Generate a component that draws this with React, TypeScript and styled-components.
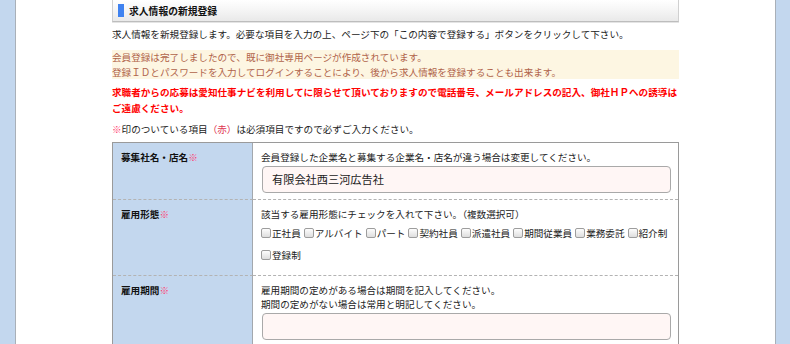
import React from "react";
import styled, { createGlobalStyle } from "styled-components";

const GlobalStyle = createGlobalStyle`
  html, body {
    margin: 0;
    padding: 0;
    background: #c3d7ee;
  }
  body {
    font-family: "Noto Sans CJK JP", "Noto Sans", sans-serif;
    color: #222;
    font-size: 9.6px;
  }
`;

const Page = styled.div`
  width: 759px;
  min-height: 344px;
  margin-left: 15px;
  background: #fff;
  border-left: 1px solid #a9b0b8;
  border-right: 1px solid #a9b0b8;
`;

const Content = styled.div`
  width: 567px;
  margin: 0 auto;
  display: flex;
  flex-direction: column;
`;

const Heading = styled.div`
  height: 21px;
  display: flex;
  align-items: center;
  gap: 5px;
  padding-left: 5px;
  border: 1px solid #d0d0d0;
  border-top: none;
  border-bottom-color: #bdbdbd;
  background: linear-gradient(#ffffff, #f7f7f7 40%, #e9e9e9);
  box-shadow: 0 1px 0 #e4e4e4;
`;

const Marker = styled.span`
  width: 6px;
  height: 13px;
  background: #3f82f0;
`;

const Title = styled.h2`
  margin: 0;
  font-size: 9.8px;
  font-weight: bold;
  color: #111;
`;

const Text = styled.p<{ $top: number; $lh?: number }>`
  margin: ${(p) => p.$top}px 0 0;
  line-height: ${(p) => p.$lh ?? 15}px;
  white-space: nowrap;
`;

const Notice = styled.div`
  margin-top: 8px;
  background: #fdf6e2;
  color: #b0634a;
  line-height: 14.5px;
  padding: 0;
`;

const Warning = styled.p`
  margin: 5px 0 0;
  color: #ff0000;
  font-weight: bold;
  line-height: 16px;
  white-space: nowrap;
`;

const Req = styled.span`
  color: #ff3c6e;
`;

const Red = styled.span`
  color: #e0334f;
`;

const Table = styled.div`
  margin-top: 5px;
  border: 1px solid #9a9a9a;
  border-bottom: none;
  display: grid;
  grid-template-columns: 140px 1fr;
`;

const Label = styled.div<{ $last?: boolean }>`
  background: #c3d7ee;
  border-right: 1px solid #a3a8ad;
  border-bottom: ${(p) => (p.$last ? "none" : "1px dashed #b3b3b3")};
  padding: 7px 0 0 8px;
  font-weight: bold;
  line-height: 15px;
  color: #111;
`;

const Cell = styled.div<{ $pb: number; $last?: boolean }>`
  border-bottom: ${(p) => (p.$last ? "none" : "1px dashed #b3b3b3")};
  padding: 7px 7px ${(p) => p.$pb}px 8px;
  line-height: 15px;
`;

const CellText = styled.div<{ $lh?: number }>`
  line-height: ${(p) => p.$lh ?? 15}px;
`;

const Input = styled.div<{ $top?: number }>`
  margin-top: ${(p) => p.$top ?? 1}px;
  margin-left: 1px;
  height: 25px;
  border: 1px solid #a9a9a9;
  border-radius: 4px;
  background: #fff6f5;
  display: flex;
  align-items: center;
  padding-left: 9px;
  font-size: 11.2px;
  color: #222;
`;

const Checks = styled.div`
  display: flex;
  flex-wrap: wrap;
  column-gap: 3px;
  line-height: 22px;
`;

const CheckItem = styled.label`
  display: inline-flex;
  align-items: center;
  white-space: nowrap;
`;

const Box = styled.span`
  width: 8px;
  height: 8px;
  margin-right: 1px;
  border: 1px solid #9d9d9d;
  border-radius: 2px;
  background: linear-gradient(#fdfdfd, #dedede);
`;

const types = ["正社員", "アルバイト", "パート", "契約社員", "派遣社員", "期間従業員", "業務委託", "紹介制", "登録制"];

export default function App() {
  return (
    <>
      <GlobalStyle />
      <Page>
        <Content>
          <Heading>
            <Marker />
            <Title>求人情報の新規登録</Title>
          </Heading>
          <Text $top={5}>
            求人情報を新規登録します。必要な項目を入力の上、ページ下の「この内容で登録する」ボタンをクリックして下さい。
          </Text>
          <Notice>
            会員登録は完了しましたので、既に御社専用ページが作成されています。
            <br />
            登録ＩＤとパスワードを入力してログインすることにより、後から求人情報を登録することも出来ます。
          </Notice>
          <Warning>
            求職者からの応募は愛知仕事ナビを利用してに限らせて頂いておりますので電話番号、メールアドレスの記入、御社ＨＰへの誘導は
            <br />
            ご遠慮ください。
          </Warning>
          <Text $top={6}>
            <Req>※</Req>印のついている項目<Red>（赤）</Red>は必須項目ですので必ずご入力ください。
          </Text>
          <Table>
            <Label>
              募集社名・店名<Req>※</Req>
            </Label>
            <Cell $pb={6}>
              <CellText>会員登録した企業名と募集する企業名・店名が違う場合は変更してください。</CellText>
              <Input $top={1}>有限会社西三河広告社</Input>
            </Cell>
            <Label>
              雇用形態<Req>※</Req>
            </Label>
            <Cell $pb={9}>
              <CellText>該当する雇用形態にチェックを入れて下さい。（複数選択可）</CellText>
              <Checks>
                {types.map((t) => (
                  <CheckItem key={t}>
                    <Box />
                    {t}
                  </CheckItem>
                ))}
              </Checks>
            </Cell>
            <Label $last>
              雇用期間<Req>※</Req>
            </Label>
            <Cell $pb={8} $last>
              <CellText $lh={14}>
                雇用期間の定めがある場合は期間を記入してください。
                <br />
                期間の定めがない場合は常用と明記してください。
              </CellText>
              <Input $top={2} />
            </Cell>
          </Table>
        </Content>
      </Page>
    </>
  );
}
